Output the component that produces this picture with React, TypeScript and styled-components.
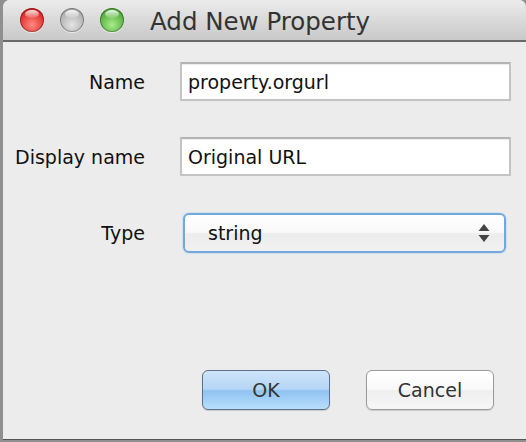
import React from 'react';
import styled, {createGlobalStyle} from 'styled-components';

const GlobalStyle = createGlobalStyle`
    html, body {
        margin: 0;
        padding: 0;
        background: #8f8f8f;
        width: 526px;
        height: 442px;
        overflow: hidden;
    }
    * {
        box-sizing: border-box;
    }
`

const font = `"DejaVu Sans", "Liberation Sans", sans-serif`;

const SWindow = styled.div`
    margin-left: 3px;
    width: 523px;
    height: 440px;
    background: #ececec;
    border-radius: 7px 7px 0 0;
    border-bottom: 1px solid #555;
    display: flex;
    flex-direction: column;
    overflow: hidden;
    font-family: ${font};
`
const STitleBar = styled.div`
    height: 42px;
    flex: none;
    display: flex;
    align-items: center;
    padding-left: 17px;
    background: linear-gradient(#ececec, #d6d6d6 60%, #c9c9c9);
    border-bottom: 2px solid #6a6a6a;
`
const SLights = styled.div`
    display: flex;
    gap: 16px;
    margin-right: 26px;
`
const SLight = styled.span<{ $c: string, $d: string }>`
    width: 24px;
    height: 24px;
    border-radius: 50%;
    background: radial-gradient(circle at 50% 70%, ${p => p.$c} 0%, ${p => p.$d} 75%);
    box-shadow: inset 0 0 0 1px rgba(0, 0, 0, 0.3), 0 1px 0 rgba(255, 255, 255, 0.6);
    position: relative;

    &::after {
        content: '';
        position: absolute;
        left: 5px;
        top: 2px;
        width: 14px;
        height: 8px;
        border-radius: 50%;
        background: linear-gradient(rgba(255, 255, 255, 0.9), rgba(255, 255, 255, 0.1));
    }
`
const STitle = styled.div`
    font-size: 24.5px;
    color: #333;
    padding-top: 2px;
`
const SBody = styled.div`
    flex: 1;
    display: flex;
    flex-direction: column;
    padding: 20px 15px 29px 13px;
`
const SForm = styled.div`
    display: grid;
    grid-template-columns: 129px 1fr;
    column-gap: 35px;
    row-gap: 36px;
    align-items: center;
`
const SLabel = styled.label`
    justify-self: end;
    font-size: 19px;
    color: #111;
    white-space: nowrap;
`
const SInput = styled.div`
    height: 39px;
    background: #fff;
    border: 2px solid #c4c4c4;
    border-top-color: #b4b4b4;
    box-shadow: inset 0 1px 1px rgba(0, 0, 0, 0.08);
    display: flex;
    align-items: center;
    padding-left: 6px;
    font-size: 19px;
    color: #111;
`
const SSelect = styled.div`
    margin: 1px 5px 0 3px;
    height: 40px;
    border-radius: 6px;
    border: 2px solid #74a7dd;
    box-shadow: 0 0 2px #9cc3ec;
    background: linear-gradient(#ffffff, #f9f9f9 48%, #ececec 52%, #f1f1f1);
    display: flex;
    align-items: center;
    justify-content: space-between;
    padding: 0 13px 0 23px;
    font-size: 19px;
    color: #111;
`
const SButtons = styled.div`
    margin-top: auto;
    display: flex;
    justify-content: flex-end;
    gap: 36px;
    padding-right: 17px;
`
const SButton = styled.button<{ $primary?: boolean }>`
    width: 128px;
    height: 40px;
    border-radius: 6px;
    font-family: ${font};
    font-size: 19px;
    color: #333;
    border: 1px solid ${p => p.$primary ? '#5d6f8c' : '#9a9a9a'};
    background: ${p => p.$primary
            ? 'linear-gradient(#cfe4f9, #b4d6f6 48%, #8fc3f1 52%, #b9defb)'
            : 'linear-gradient(#ffffff, #f9f9f9 48%, #efefef 52%, #f6f6f6)'};
    box-shadow: 0 1px 1px rgba(0, 0, 0, 0.15);
`

const Arrows = () => (
    <svg width="14" height="22" viewBox="0 0 14 22">
        <path d="M7 2 L12.5 9 L1.5 9 Z" fill="#444"/>
        <path d="M1.5 13 L12.5 13 L7 20 Z" fill="#444"/>
    </svg>
);

export default function App() {
    return (
        <>
            <GlobalStyle/>
            <SWindow>
                <STitleBar>
                    <SLights>
                        <SLight $c="#ff8a80" $d="#d81e1e"/>
                        <SLight $c="#e4e4e4" $d="#a9a9a9"/>
                        <SLight $c="#a6ec8a" $d="#4aa533"/>
                    </SLights>
                    <STitle>Add New Property</STitle>
                </STitleBar>
                <SBody>
                    <SForm>
                        <SLabel>Name</SLabel>
                        <SInput>property.orgurl</SInput>
                        <SLabel>Display name</SLabel>
                        <SInput>Original URL</SInput>
                        <SLabel>Type</SLabel>
                        <SSelect>
                            <span>string</span>
                            <Arrows/>
                        </SSelect>
                    </SForm>
                    <SButtons>
                        <SButton $primary>OK</SButton>
                        <SButton>Cancel</SButton>
                    </SButtons>
                </SBody>
            </SWindow>
        </>
    );
}
